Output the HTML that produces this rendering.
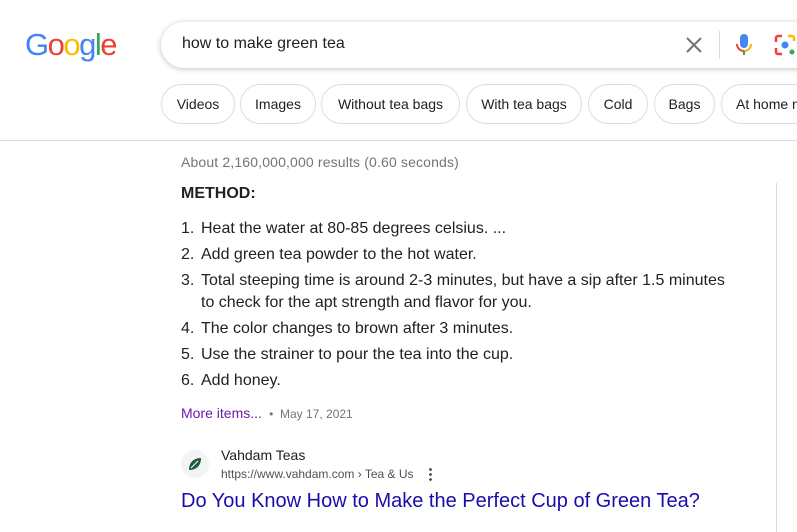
<!DOCTYPE html>
<html><head><style>
body{margin:0;width:797px;height:532px;overflow:hidden;background:#fff;font-family:"Liberation Sans",Arial,sans-serif;position:relative;color:#202124}
.a{position:absolute;white-space:nowrap}
.logo{left:25px;top:27px;font-size:31px;letter-spacing:-1.5px}
.box{left:161px;top:22px;width:700px;height:46px;border-radius:24px;box-shadow:0 1px 6px rgba(32,33,36,.28);background:#fff}
.chip{position:absolute;top:84px;height:38px;border:1px solid #dadce0;border-radius:20px;font-size:14px;line-height:38px;text-align:center;color:#202124}
.li{font-size:16px;color:#202124;left:201px}
.n{position:absolute;left:-20px}
</style></head><body>
<div class="a logo"><span style="color:#4285f4">G</span><span style="color:#ea4335">o</span><span style="color:#fbbc05">o</span><span style="color:#4285f4">g</span><span style="color:#34a853">l</span><span style="color:#ea4335">e</span></div>
<div class="a box"></div>
<div class="a" style="left:182px;top:35px;font-size:16px">how to make green tea</div>
<svg class="a" style="left:685px;top:36px" width="18" height="18" viewBox="0 0 18 18"><path d="M2 2L16 16M16 2L2 16" stroke="#70757a" stroke-width="2"/></svg>
<div class="a" style="left:719px;top:31px;width:1px;height:28px;background:#dadce0"></div>
<svg class="a" style="left:735px;top:33px" width="18" height="24" viewBox="0 0 18 24"><rect x="5" y="1" width="8" height="14" rx="4" fill="#4285f4"/><path d="M2 11a7 7 0 0 0 14 0" stroke="#ea4335" stroke-width="2" fill="none"/><path d="M16 11a7 7 0 0 1-7 7" stroke="#fbbc05" stroke-width="2" fill="none"/><rect x="8" y="18" width="2" height="4" fill="#34a853"/></svg>
<svg class="a" style="left:774px;top:34px" width="22" height="22" viewBox="0 0 22 22"><path d="M2 8V4a2 2 0 0 1 2-2h4" stroke="#ea4335" stroke-width="2.5" fill="none"/><path d="M14 2h4a2 2 0 0 1 2 2v3" stroke="#fbbc05" stroke-width="2.5" fill="none"/><path d="M2 14v4a2 2 0 0 0 2 2h4" stroke="#ea4335" stroke-width="2.5" fill="none"/><circle cx="11" cy="11" r="3.5" fill="#4285f4"/><circle cx="18" cy="18" r="2.5" fill="#34a853"/></svg>
<div class="chip" style="left:161px;width:72px">Videos</div>
<div class="chip" style="left:240px;width:74px">Images</div>
<div class="chip" style="left:321px;width:137px">Without tea bags</div>
<div class="chip" style="left:466px;width:114px">With tea bags</div>
<div class="chip" style="left:588px;width:58px">Cold</div>
<div class="chip" style="left:654px;width:59px">Bags</div>
<div class="chip" style="left:721px;width:120px;text-align:left;padding-left:14px">At home n</div>
<div class="a" style="left:0;top:140px;width:797px;height:1px;background:#dadce0"></div>
<div class="a" style="left:776px;top:183px;width:1px;height:349px;background:#dadce0"></div>
<div class="a" style="left:181px;top:154px;font-size:14px;color:#70757a;letter-spacing:0.15px">About 2,160,000,000 results (0.60 seconds)</div>
<div class="a" style="left:181px;top:185px;font-size:16px;font-weight:bold">METHOD:</div>
<div class="a li" style="top:220px"><span class="n">1.</span>Heat the water at 80-85 degrees celsius. ...</div>
<div class="a li" style="top:246px"><span class="n">2.</span>Add green tea powder to the hot water.</div>
<div class="a li" style="top:272px"><span class="n">3.</span>Total steeping time is around 2-3 minutes, but have a sip after 1.5 minutes</div>
<div class="a li" style="top:294px">to check for the apt strength and flavor for you.</div>
<div class="a li" style="top:320px"><span class="n">4.</span>The color changes to brown after 3 minutes.</div>
<div class="a li" style="top:346px"><span class="n">5.</span>Use the strainer to pour the tea into the cup.</div>
<div class="a li" style="top:372px"><span class="n">6.</span>Add honey.</div>
<div class="a" style="left:181px;top:405px;font-size:14px;color:#681da8">More items... <span style="color:#70757a;font-size:12px">&nbsp;•&nbsp; May 17, 2021</span></div>
<div class="a" style="left:181px;top:450px;width:28px;height:28px;border-radius:50%;background:#f1f3f4"></div>
<svg class="a" style="left:187px;top:456px" width="16" height="16" viewBox="0 0 16 16"><path d="M2 14C2 6 7 2 14 2C14 10 9 14 2 14Z" fill="#1e5e3b"/><path d="M4 12L11 5" stroke="#fff" stroke-width="1"/></svg>
<div class="a" style="left:221px;top:447px;font-size:14px">Vahdam Teas</div>
<div class="a" style="left:221px;top:467px;font-size:12px;color:#4d5156">https://www.vahdam.com › Tea &amp; Us</div>
<div class="a" style="left:429px;top:467px;width:3px;height:14px;background:radial-gradient(circle,#4d5156 1.3px,transparent 1.5px) 0 0/3px 5px"></div>
<div class="a" style="left:181px;top:490px;font-size:20px;color:#1a0dab">Do You Know How to Make the Perfect Cup of Green Tea?</div>
</body></html>
